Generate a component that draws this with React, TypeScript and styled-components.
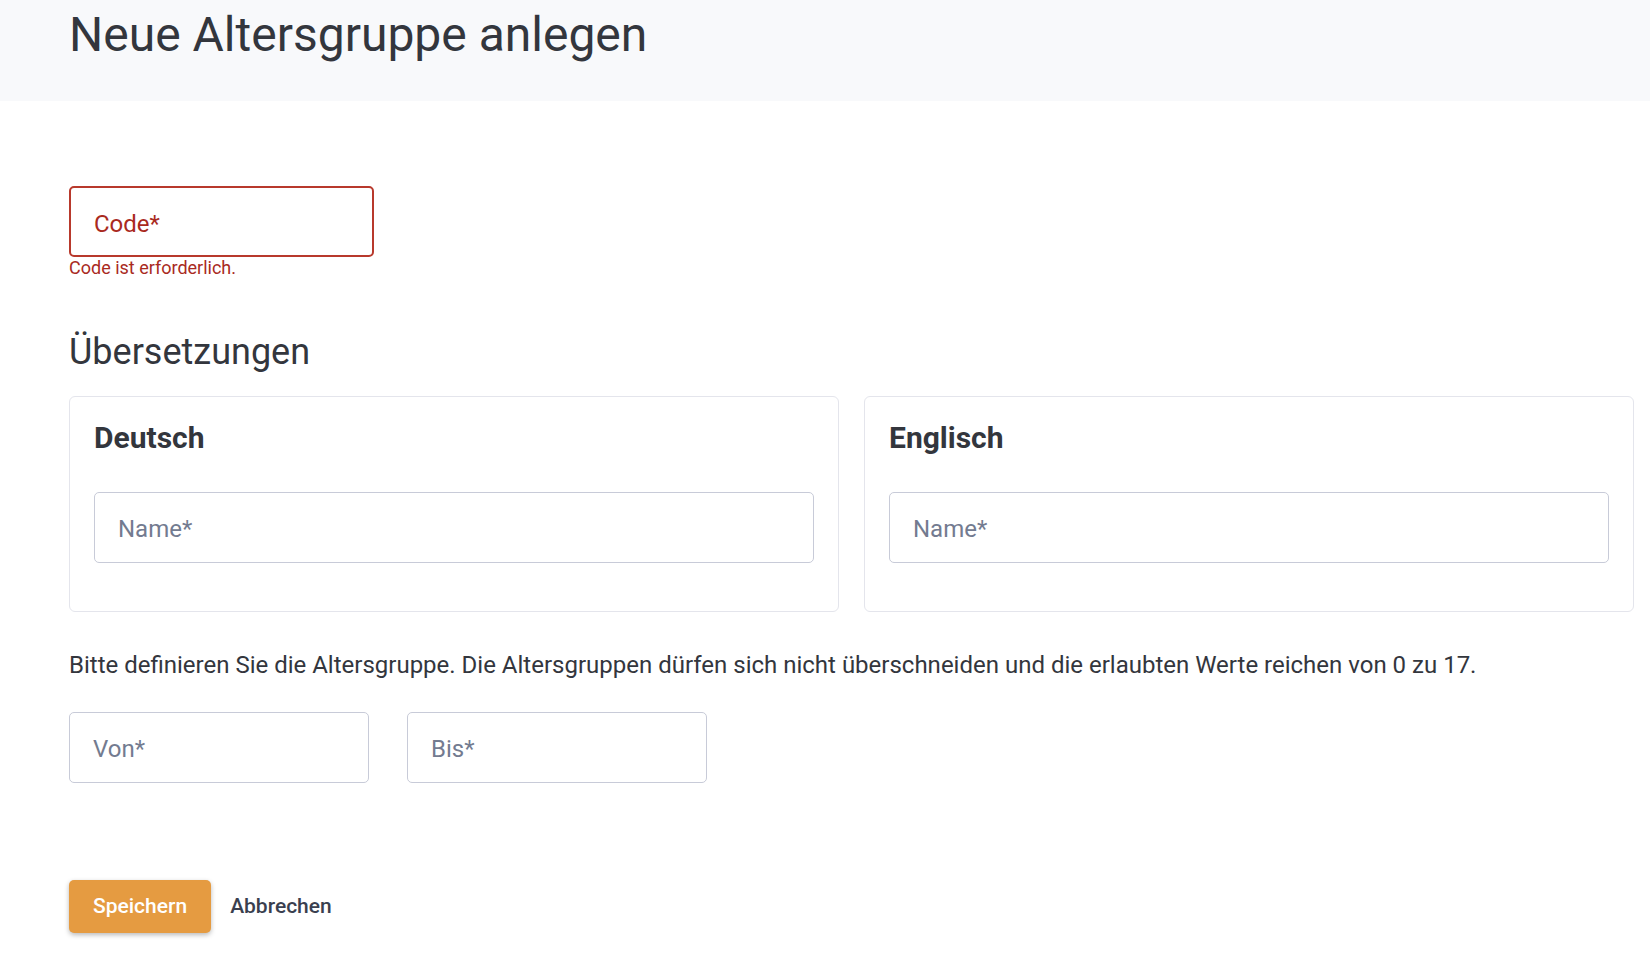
import React from "react";
import styled, { createGlobalStyle } from "styled-components";

const GlobalStyle = createGlobalStyle`
  html, body {
    margin: 0;
    padding: 0;
    background: #ffffff;
  }
  body {
    font-family: Roboto, "Liberation Sans", Arial, sans-serif;
    color: #33363d;
  }
  * { box-sizing: border-box; }
`;

const Header = styled.header`
  background: #f8f9fb;
  height: 101px;
  padding: 6px 16px 0 69px;
`;

const Title = styled.h1`
  margin: 0;
  font-size: 48px;
  line-height: 1.2;
  font-weight: 400;
  color: #33363d;
`;

const Main = styled.main`
  padding: 85px 16px 20px 69px;
  display: flex;
  flex-direction: column;
`;

const Field = styled.div`
  display: flex;
  flex-direction: column;
  width: ${(p: { $width?: string }) => p.$width || "100%"};
`;

const Input = styled.input<{ $error?: boolean }>`
  height: 71px;
  width: 100%;
  border: ${(p) => (p.$error ? "2px solid #b8392c" : "1px solid #c8cbd8")};
  border-radius: 5px;
  padding: 4px 23px 0;
  font-family: Roboto, "Liberation Sans", Arial, sans-serif;
  font-size: 24px;
  color: #33363d;
  background: #fff;
  outline: none;
  &::placeholder {
    color: ${(p) => (p.$error ? "#a92a1e" : "#737b90")};
    opacity: 1;
  }
`;

const ErrorText = styled.div`
  font-size: 18px;
  line-height: 1.2;
  color: #a92a1e;
`;

const SectionTitle = styled.h2`
  margin: 52px 0 22px;
  font-size: 36px;
  line-height: 1.2;
  font-weight: 400;
  color: #33363d;
`;

const Cards = styled.div`
  display: grid;
  grid-template-columns: 1fr 1fr;
  gap: 25px;
`;

const Card = styled.section`
  border: 1px solid #e4e5ec;
  border-radius: 6px;
  padding: 24px;
  background: #fff;
`;

const CardTitle = styled.h3`
  margin: 0 0 36px;
  font-size: 30px;
  line-height: 1.16;
  font-weight: 700;
  color: #33363d;
`;

const CardField = styled.div`
  margin-bottom: 24px;
`;

const Hint = styled.p`
  margin: 35px 0 29px;
  font-size: 24px;
  line-height: 1.5;
  color: #33363d;
`;

const RangeRow = styled.div`
  display: flex;
  gap: 38px;
`;

const Actions = styled.div`
  display: flex;
  align-items: center;
  gap: 19px;
  margin-top: 97px;
`;

const PrimaryButton = styled.button`
  height: 53px;
  padding: 0 24px;
  border: none;
  border-radius: 5px;
  background: #e59b41;
  color: #ffffff;
  font-family: Roboto, "Liberation Sans", Arial, sans-serif;
  font-size: 21px;
  font-weight: 500;
  box-shadow: 0 2px 5px rgba(0, 0, 0, 0.28);
  cursor: pointer;
`;

const TextButton = styled.button`
  border: none;
  background: none;
  padding: 0;
  color: #3a3f4f;
  font-family: Roboto, "Liberation Sans", Arial, sans-serif;
  font-size: 21px;
  font-weight: 500;
  cursor: pointer;
`;

const languages = ["Deutsch", "Englisch"];

export default function App() {
  return (
    <>
      <GlobalStyle />
      <Header>
        <Title>Neue Altersgruppe anlegen</Title>
      </Header>
      <Main>
        <Field $width="305px">
          <Input $error placeholder="Code*" />
          <ErrorText>Code ist erforderlich.</ErrorText>
        </Field>

        <SectionTitle>Übersetzungen</SectionTitle>
        <Cards>
          {languages.map((lang) => (
            <Card key={lang}>
              <CardTitle>{lang}</CardTitle>
              <CardField>
                <Input placeholder="Name*" />
              </CardField>
            </Card>
          ))}
        </Cards>

        <Hint>
          Bitte definieren Sie die Altersgruppe. Die Altersgruppen dürfen sich
          nicht überschneiden und die erlaubten Werte reichen von 0 zu 17.
        </Hint>

        <RangeRow>
          <Field $width="300px">
            <Input placeholder="Von*" />
          </Field>
          <Field $width="300px">
            <Input placeholder="Bis*" />
          </Field>
        </RangeRow>

        <Actions>
          <PrimaryButton>Speichern</PrimaryButton>
          <TextButton>Abbrechen</TextButton>
        </Actions>
      </Main>
    </>
  );
}
